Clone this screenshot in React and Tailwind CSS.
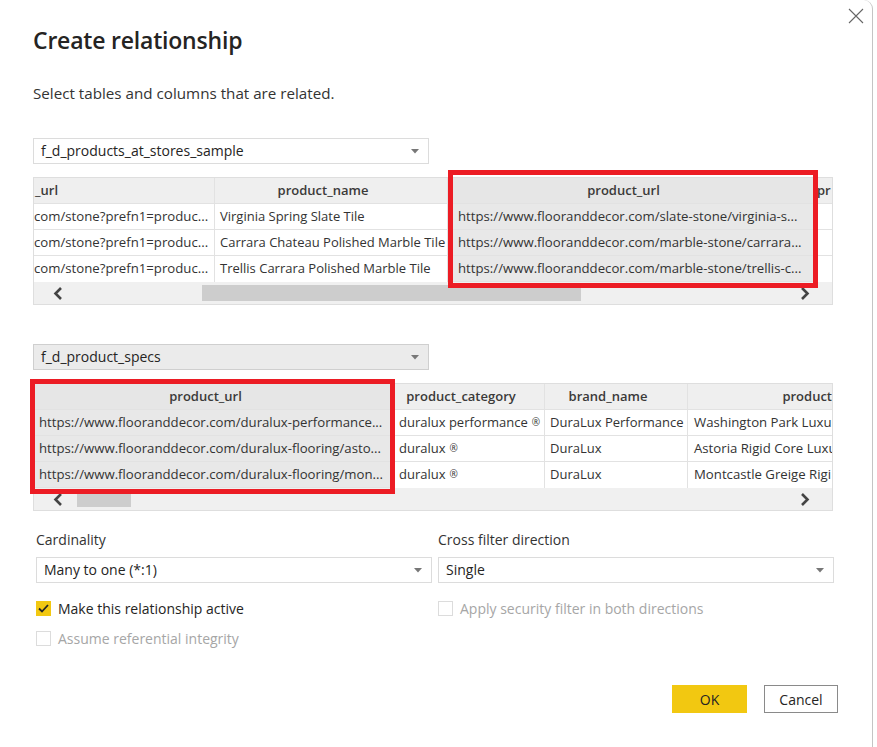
import React from 'react'

const font = { fontFamily: '"Open Sans", "Noto Sans", Arial, sans-serif' }

function Caret() {
  return (
    <svg width="8" height="5" viewBox="0 0 8 5" className="shrink-0">
      <path d="M0 0 L8 0 L4 4.5 Z" fill="#777" />
    </svg>
  )
}

function Dropdown({ value, grey, className = '' }) {
  return (
    <div
      className={`flex items-center justify-between h-[26px] pl-[7px] pr-[9px] border ${
        grey ? 'bg-[#ebebeb] border-[#cfcfcf]' : 'bg-white border-[#dcdcdc]'
      } ${className}`}
    >
      <span className="text-[14px] text-[#252423] leading-none">{value}</span>
      <Caret />
    </div>
  )
}

function Chevron({ dir }) {
  return (
    <svg width="10" height="13" viewBox="0 0 10 13">
      <path
        d={dir === 'left' ? 'M8 1 L2.5 6.5 L8 12' : 'M2 1 L7.5 6.5 L2 12'}
        fill="none"
        stroke="#444"
        strokeWidth="2.6"
      />
    </svg>
  )
}

const Reg = () => <sup className="text-[10px] relative -top-[1px] ml-[4px]">®</sup>

function Column({ width, header, cells, selected, headerAlign = 'center', pad = 6, size = 13.2, frame, last }) {
  const headerCls =
    headerAlign === 'center'
      ? 'justify-center pl-[2px] pr-[18px]'
      : headerAlign === 'right'
      ? 'justify-end'
      : 'justify-start pl-[1px]'
  return (
    <div
      className={`relative flex flex-col shrink-0 ${last ? 'overflow-hidden' : 'border-r border-[#e2e2e2]'}`}
      style={{ width }}
    >
      <div
        className={`h-[26px] flex items-center whitespace-nowrap overflow-hidden border-b border-[#e2e2e2] ${
          selected ? 'bg-[#e6e6e6]' : 'bg-[#efefef]'
        } ${headerCls}`}
      >
        <span className="text-[13px] font-semibold text-[#3b3a39]">{header}</span>
      </div>
      {cells.map((c, i) => (
        <div
          key={i}
          className={`h-[26px] flex items-center whitespace-nowrap overflow-hidden border-b border-[#e2e2e2] last:border-b-0 ${
            selected ? 'bg-[#e8e8e8]' : 'bg-white'
          }`}
          style={{ paddingLeft: pad }}
        >
          <span className="text-[#333]" style={{ fontSize: size }}>{c}</span>
        </div>
      ))}
      {frame && (
        <div
          className="absolute z-10 border-[5px] border-[#ec1c24] pointer-events-none"
          style={frame}
        />
      )}
    </div>
  )
}

function Table({ columns, thumbLeft, thumbWidth }) {
  return (
    <div className="w-[800px] border border-[#dedede] bg-white">
      <div className="flex h-[104px]">
        {columns.map((col, i) => (
          <Column key={i} {...col} />
        ))}
      </div>
      <div className="relative h-[22px] bg-[#f0f0f0] flex items-center justify-between pl-[19px] pr-[22px]">
        <Chevron dir="left" />
        <div
          className="absolute top-[3px] h-[16px] bg-[#cdcdcd]"
          style={{ left: thumbLeft, width: thumbWidth }}
        />
        <Chevron dir="right" />
      </div>
    </div>
  )
}

function Checkbox({ checked, disabled, label }) {
  return (
    <div className="flex items-center gap-[7px] h-[20px]">
      <div
        className={`w-[15px] h-[15px] flex items-center justify-center ${
          checked ? 'bg-[#f2c811]' : 'border border-[#dcdcdc] bg-white'
        }`}
      >
        {checked && (
          <svg width="11" height="9" viewBox="0 0 11 9">
            <path d="M1 4.5 L4 7.5 L10 1" fill="none" stroke="#252423" strokeWidth="1.8" />
          </svg>
        )}
      </div>
      <span className={`text-[14px] ${disabled ? 'text-[#a6a6a6]' : 'text-[#252423]'}`}>{label}</span>
    </div>
  )
}

export default function App() {
  const table1 = [
    {
      width: 181,
      header: '_url',
      headerAlign: 'left',
      pad: 0,
      cells: ['com/stone?prefn1=produc...', 'com/stone?prefn1=produc...', 'com/stone?prefn1=produc...'],
    },
    {
      width: 233,
      header: 'product_name',
      pad: 5,
      size: 13,
      cells: ['Virginia Spring Slate Tile', 'Carrara Chateau Polished Marble Tile', 'Trellis Carrara Polished Marble Tile'],
    },
    {
      width: 368,
      header: 'product_url',
      selected: true,
      pad: 10,
      frame: { left: 0, right: -3, top: -8, bottom: -6 },
      cells: [
        'https://www.flooranddecor.com/slate-stone/virginia-s...',
        'https://www.flooranddecor.com/marble-stone/carrara...',
        'https://www.flooranddecor.com/marble-stone/trellis-c...',
      ],
    },
    { width: 16, header: 'pr', headerAlign: 'left', last: true, cells: ['', '', ''] },
  ]

  const table2 = [
    {
      width: 360,
      header: 'product_url',
      selected: true,
      pad: 5,
      frame: { left: -4, right: -2, top: -5, bottom: -6 },
      cells: [
        'https://www.flooranddecor.com/duralux-performance...',
        'https://www.flooranddecor.com/duralux-flooring/asto...',
        'https://www.flooranddecor.com/duralux-flooring/mon...',
      ],
    },
    {
      width: 151,
      header: 'product_category',
      pad: 5,
      size: 13,
      cells: [
        <>duralux performance<Reg /></>,
        <>duralux<Reg /></>,
        <>duralux<Reg /></>,
      ],
    },
    {
      width: 143,
      header: 'brand_name',
      pad: 5,
      size: 13,
      cells: ['DuraLux Performance', 'DuraLux', 'DuraLux'],
    },
    {
      width: 144,
      header: 'product',
      headerAlign: 'right',
      last: true,
      cells: ['Washington Park Luxur', 'Astoria Rigid Core Luxu', 'Montcastle Greige Rigi'],
    },
  ]

  return (
    <div className="w-[877px] h-[747px] bg-white overflow-hidden" style={font}>
      <div className="relative w-[873px] h-[747px] border-r border-[#c4c4c4] rounded-tr-[9px] pl-[33px]">
        <button className="absolute top-[8px] right-[8px] w-[16px] h-[16px]">
          <svg width="16" height="16" viewBox="0 0 16 16">
            <path d="M1 1 L15 15 M15 1 L1 15" stroke="#666" strokeWidth="1.1" />
          </svg>
        </button>

        <h1 className="pt-[24px] text-[23px] font-semibold text-[#252423] leading-[32px] tracking-[-0.2px]">
          Create relationship
        </h1>
        <p className="mt-[27px] text-[15.2px] text-[#333] leading-[20px]">Select tables and columns that are related.</p>

        <Dropdown value="f_d_products_at_stores_sample" className="mt-[35px] w-[396px]" />
        <div className="mt-[13px]">
          <Table columns={table1} thumbLeft={168} thumbWidth={379} />
        </div>

        <Dropdown value="f_d_product_specs" grey className="mt-[39px] w-[396px]" />
        <div className="mt-[13px]">
          <Table columns={table2} thumbLeft={43} thumbWidth={54} />
        </div>

        <div className="mt-[19px] pl-[3px] flex gap-[6px]">
          <div className="w-[396px] flex flex-col">
            <span className="text-[14px] text-[#333] leading-[20px]">Cardinality</span>
            <Dropdown value="Many to one (*:1)" className="mt-[7px]" />
            <div className="mt-[15px] flex flex-col gap-[10px]">
              <Checkbox checked label="Make this relationship active" />
              <Checkbox disabled label="Assume referential integrity" />
            </div>
          </div>
          <div className="w-[396px] flex flex-col">
            <span className="text-[14px] text-[#333] leading-[20px]">Cross filter direction</span>
            <Dropdown value="Single" className="mt-[7px]" />
            <div className="mt-[15px]">
              <Checkbox disabled label="Apply security filter in both directions" />
            </div>
          </div>
        </div>

        <div className="mt-[37px] flex justify-end gap-[17px] pr-[34px]">
          <button className="w-[75px] h-[28px] bg-[#f2c811] text-[14px] text-[#252423]">OK</button>
          <button className="w-[74px] h-[28px] bg-white border border-[#8a8a8a] text-[14px] text-[#252423]">Cancel</button>
        </div>
      </div>
    </div>
  )
}
